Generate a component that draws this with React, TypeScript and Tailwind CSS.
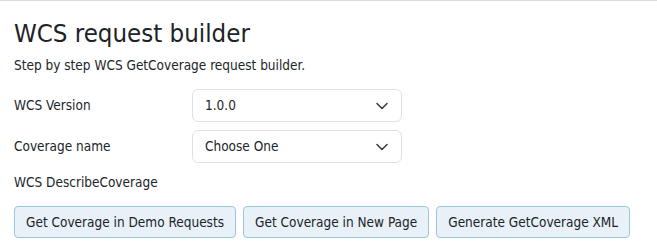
const font = { fontFamily: 'Tahoma, "DejaVu Sans Condensed", "DejaVu Sans", sans-serif' };

function Select({ value }: { value: string }) {
  return (
    <div className="flex h-[33px] w-[210px] items-center justify-between rounded-[6px] border border-[#dee2e6] bg-white pl-3 pr-[13px] text-[13.5px] text-[#212529]">
      <span>{value}</span>
      <svg width="12" height="8" viewBox="0 0 12 8" fill="none">
        <path d="M1 1.5 6 6.5 11 1.5" stroke="#343a40" strokeWidth="1.5" strokeLinecap="round" strokeLinejoin="round" />
      </svg>
    </div>
  );
}

export default function App() {
  const buttons = [
    "Get Coverage in Demo Requests",
    "Get Coverage in New Page",
    "Generate GetCoverage XML",
  ];

  return (
    <div className="h-[252px] w-[657px] border-t border-[#dcdcde] bg-white pl-[14px] text-[#212529]" style={font}>
      <h1 className="mt-[17px] text-[25.6px] leading-[30px] text-[#1d2327]">WCS request builder</h1>
      <p className="mt-[9px] text-[13.5px] leading-[16px]">Step by step WCS GetCoverage request builder.</p>

      <div className="mt-[16px] flex flex-col gap-2">
        <div className="flex items-center">
          <label className="w-[178px] text-[13.5px]">WCS Version</label>
          <Select value="1.0.0" />
        </div>
        <div className="flex items-center">
          <label className="w-[178px] text-[13.5px]">Coverage name</label>
          <Select value="Choose One" />
        </div>
      </div>

      <div className="mt-[11px] text-[13.5px] leading-[16px]">WCS DescribeCoverage</div>

      <div className="mt-[16px] flex gap-[7px]">
        {buttons.map((b) => (
          <button
            key={b}
            className="h-[32px] rounded-[4px] border border-[#9cc5de] bg-[#e8f1f8] px-[11px] text-[13.5px] text-[#1d2327]"
          >
            {b}
          </button>
        ))}
      </div>
    </div>
  );
}
